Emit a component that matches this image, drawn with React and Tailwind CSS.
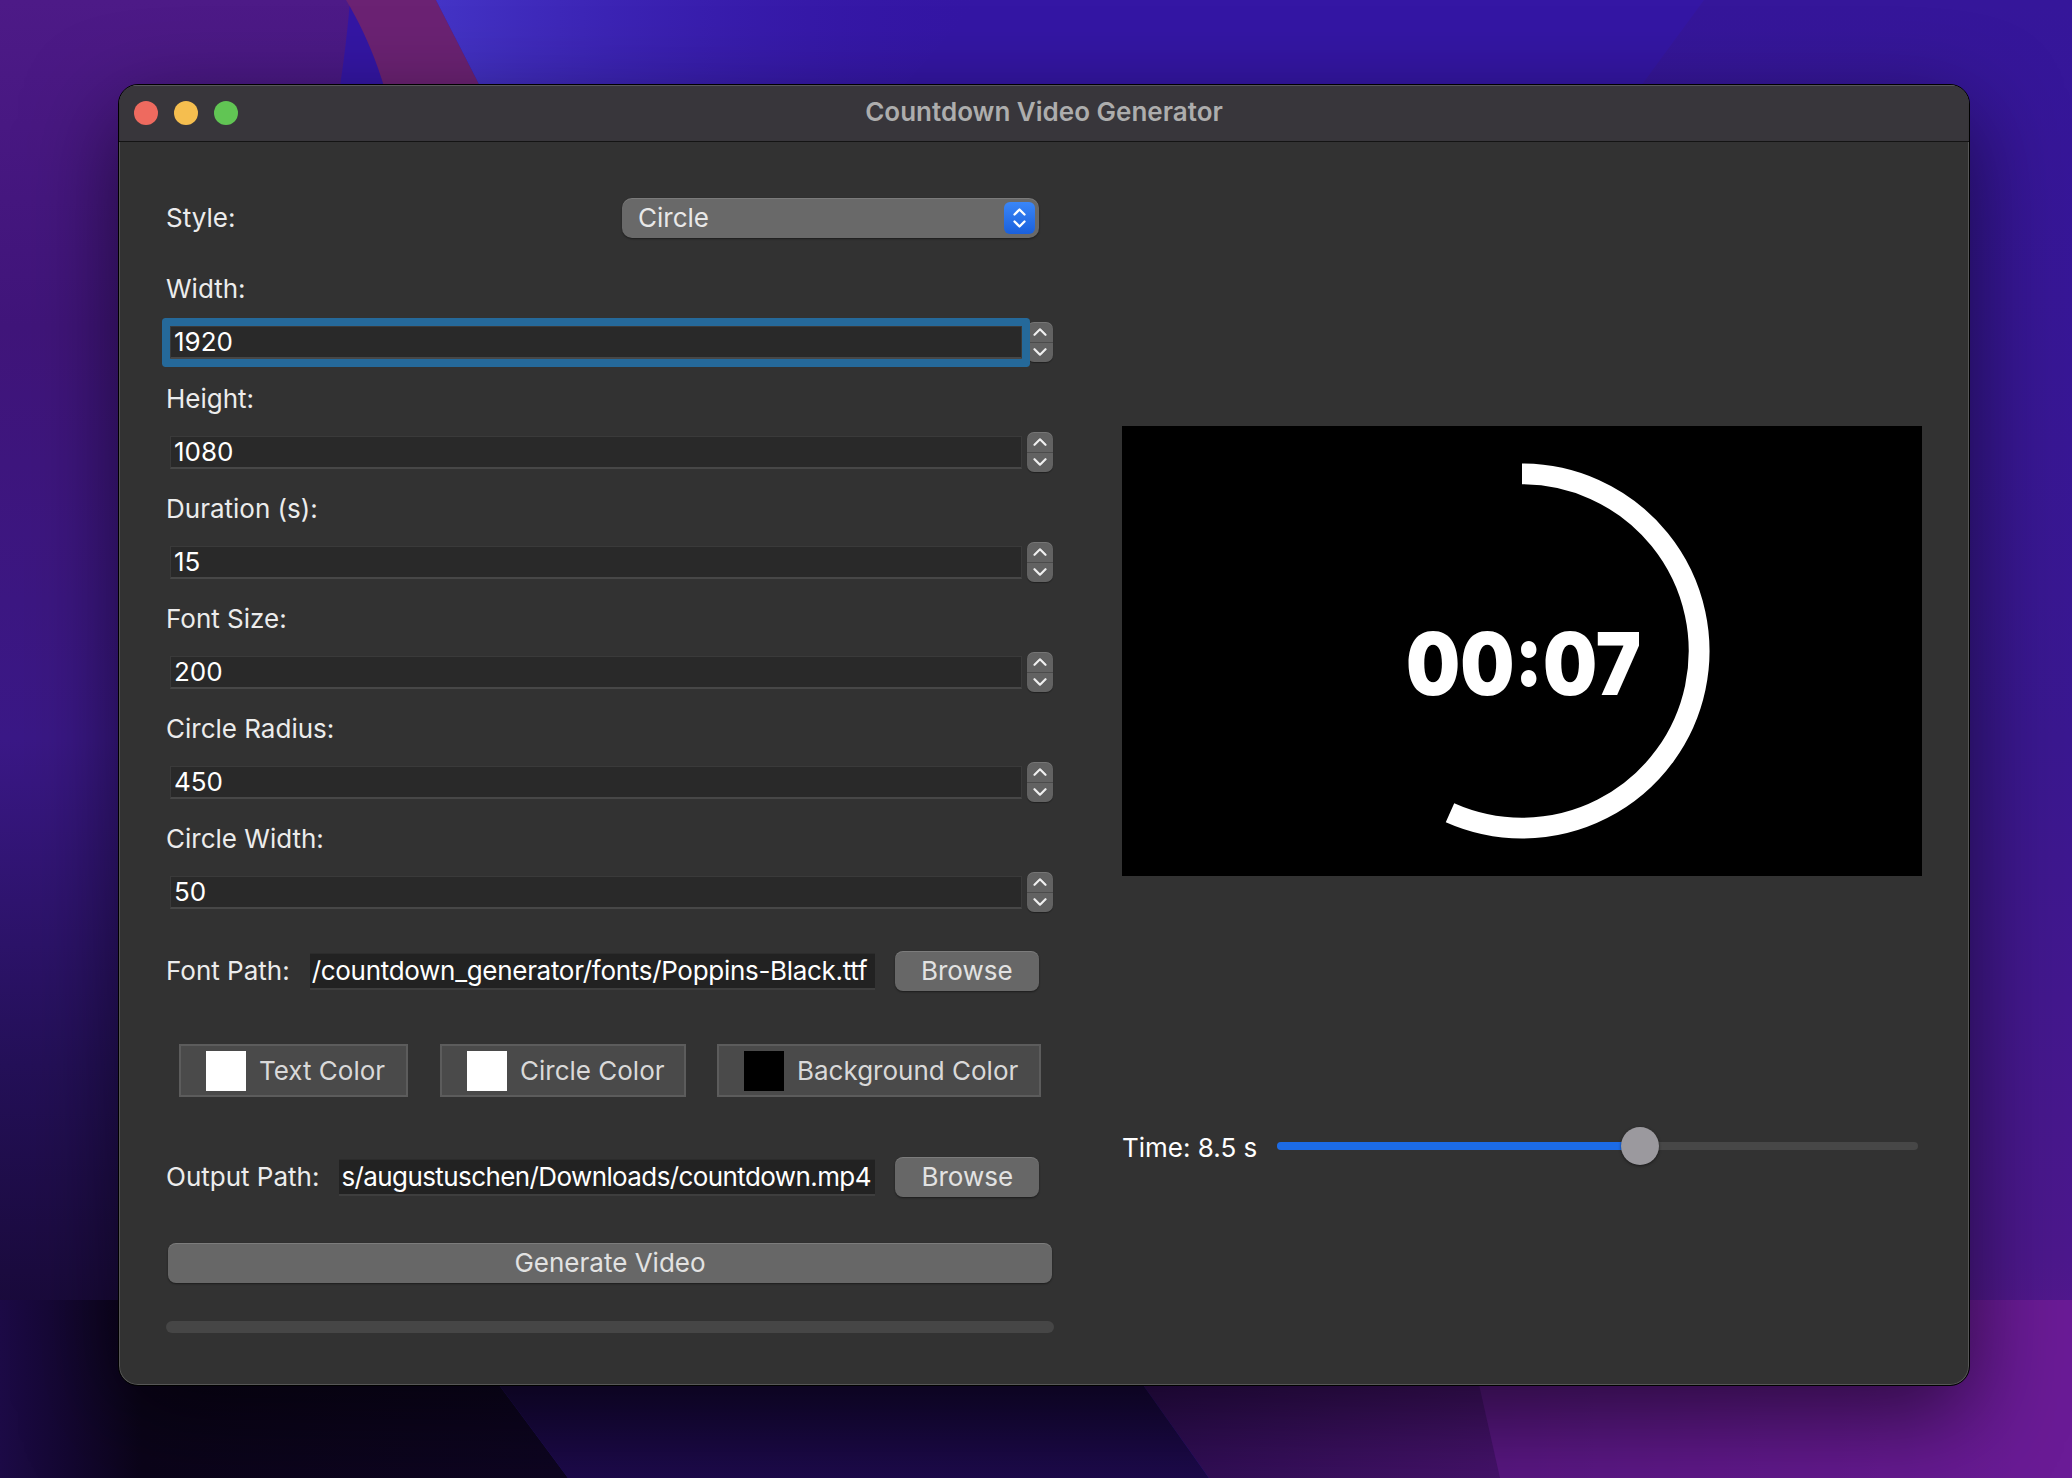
import React from "react";

const FONT = { fontFamily: 'Inter, "Noto Sans", "Liberation Sans", sans-serif' };

function Chevron({ dir }) {
  return (
    <svg width="14" height="8" viewBox="0 0 14 8" fill="none">
      <polyline
        points={dir === "up" ? "1.5,6.8 7,1.3 12.5,6.8" : "1.5,1.2 7,6.7 12.5,1.2"}
        stroke="#eeeeee"
        strokeWidth="2.2"
        strokeLinecap="round"
        strokeLinejoin="round"
      />
    </svg>
  );
}

function Stepper() {
  return (
    <div className="ml-[5px] w-[26px] h-[40px] rounded-[7px] bg-[#626262] flex flex-col overflow-hidden shadow-[inset_0_1px_0_rgba(255,255,255,0.12),0_1px_1px_rgba(0,0,0,0.35)]">
      <div className="flex-1 flex items-center justify-center border-b border-[#4b4b4b]">
        <Chevron dir="up" />
      </div>
      <div className="flex-1 flex items-center justify-center">
        <Chevron dir="down" />
      </div>
    </div>
  );
}

function SpinField({ value, focused }) {
  return (
    <div className="flex items-center h-[40px] pr-[1px]">
      <div
        className={
          "ml-[4px] flex-1 h-[33px] flex items-center pl-[3px] text-white text-[26px] leading-none bg-[#292929] border-x border-t border-[#3a3a3a] border-b-2 border-b-[#474747] " +
          (focused ? "rounded-[1px] shadow-[0_0_0_8px_#25699a] relative z-10" : "")
        }
      >
        {value}
      </div>
      <Stepper />
    </div>
  );
}

function Label({ children, className }) {
  return (
    <div className={"h-[36px] flex items-center text-[26px] leading-none text-[#ececec] " + (className || "")}>
      {children}
    </div>
  );
}

function PathField({ widthClass, text, tracking }) {
  return (
    <div
      className={
        widthClass +
        " h-[37px] bg-[#222222] border-b-2 border-[#3e3e3e] border-t border-t-[#2c2c2c] flex items-center overflow-hidden pl-[2px] text-white text-[26px] leading-none whitespace-nowrap"
      }
    >
      <span className={tracking}>{text}</span>
    </div>
  );
}

function GrayButton({ children, className }) {
  return (
    <div
      className={
        "h-[40px] rounded-[8px] bg-[#676767] flex items-center justify-center text-[26px] leading-none text-[#e2e2e2] shadow-[inset_0_1px_0_rgba(255,255,255,0.14),0_1px_2px_rgba(0,0,0,0.45)] " +
        (className || "")
      }
    >
      {children}
    </div>
  );
}

function ColorButton({ swatch, label, className }) {
  return (
    <div
      className={
        "h-[53px] border-2 border-[#5c5c5c] bg-[#4a4a4a] flex items-center pl-[25px] gap-[13px] text-[26px] leading-none text-[#d9d9d9] " +
        (className || "")
      }
    >
      <div className={"w-[40px] h-[40px] shrink-0 " + swatch} />
      <span>{label}</span>
    </div>
  );
}

function Wallpaper() {
  return (
    <svg
      className="absolute inset-0 w-full h-full"
      viewBox="0 0 2072 1478"
      preserveAspectRatio="none"
    >
      <defs>
        <linearGradient id="leftG" x1="0" y1="0" x2="0" y2="1">
          <stop offset="0" stopColor="#4d1a87" />
          <stop offset="0.22" stopColor="#40157a" />
          <stop offset="0.5" stopColor="#3a1886" />
          <stop offset="0.72" stopColor="#241058" />
          <stop offset="1" stopColor="#120626" />
        </linearGradient>
        <linearGradient id="glow" x1="0" y1="0" x2="1" y2="0">
          <stop offset="0" stopColor="#4434c6" />
          <stop offset="1" stopColor="#3616a8" stopOpacity="0" />
        </linearGradient>
        <linearGradient id="rightG" x1="0" y1="0" x2="0" y2="1">
          <stop offset="0" stopColor="#35169a" />
          <stop offset="0.5" stopColor="#3a1890" />
          <stop offset="0.85" stopColor="#4c188c" />
          <stop offset="1" stopColor="#621a90" />
        </linearGradient>
        <linearGradient id="brG" x1="0" y1="0" x2="1" y2="0">
          <stop offset="0" stopColor="#2a0c4e" />
          <stop offset="0.4" stopColor="#44126a" />
          <stop offset="1" stopColor="#6c1c98" />
        </linearGradient>
        <linearGradient id="darkG" x1="0" y1="0" x2="1" y2="0">
          <stop offset="0" stopColor="#1c0a46" />
          <stop offset="0.25" stopColor="#0b041a" />
          <stop offset="1" stopColor="#0e0522" />
        </linearGradient>
        <linearGradient id="midG" x1="0" y1="0" x2="0" y2="1">
          <stop offset="0" stopColor="#0f0528" />
          <stop offset="1" stopColor="#1d0a4c" />
        </linearGradient>
      </defs>
      <rect x="0" y="0" width="2072" height="1478" fill="#3416a4" />
      <path d="M0 0 H350 C330 260 200 600 150 900 L150 1478 H0 Z" fill="url(#leftG)" />
      <path d="M346 0 H436 L482 90 L470 160 L400 160 C390 90 370 40 346 0 Z" fill="#6b2273" />
      <path d="M436 0 H980 L900 90 H482 Z" fill="url(#glow)" />
      <path d="M1704 0 H2072 V1478 H1940 V200 C1800 140 1680 80 1638 90 Z" fill="url(#rightG)" />
      <path d="M1083 1300 H2072 V1478 H1209 Z" fill="url(#brG)" />
      <path d="M1460 1300 H2072 V1478 H1500 Z" fill="#6a1c96" opacity="0.55" />
      <path d="M436 1300 H1083 L1209 1478 H568 Z" fill="url(#midG)" />
      <path d="M0 1300 H436 L568 1478 H0 Z" fill="url(#darkG)" />
    </svg>
  );
}

function Preview() {
  const cx = 400;
  const cy = 225;
  const r = 177.1;
  const end = (114 * Math.PI) / 180;
  const ex = cx + r * Math.cos(end);
  const ey = cy + r * Math.sin(end);
  return (
    <div className="h-[450px] bg-black">
      <svg width="800" height="450" viewBox="0 0 800 450">
        <path
          d={`M ${cx} ${cy - r} A ${r} ${r} 0 1 1 ${ex.toFixed(1)} ${ey.toFixed(1)}`}
          stroke="#ffffff"
          strokeWidth="20.8"
          fill="none"
          strokeLinecap="butt"
        />
        <text
          x="401.5"
          y="269"
          textAnchor="middle"
          fill="#ffffff"
          fontSize="86"
          fontWeight="900"
          textLength="235"
          lengthAdjust="spacingAndGlyphs"
          style={{ fontFamily: 'Inter, "DejaVu Sans", sans-serif' }}
        >
          00:07
        </text>
      </svg>
    </div>
  );
}

export default function App() {
  const spins = [
    { label: "Width:", value: "1920", focused: true, mt: "mt-[33px]" },
    { label: "Height:", value: "1080", mt: "mt-[19px]" },
    { label: "Duration (s):", value: "15", mt: "mt-[19px]" },
    { label: "Font Size:", value: "200", mt: "mt-[19px]" },
    { label: "Circle Radius:", value: "450", mt: "mt-[19px]" },
    { label: "Circle Width:", value: "50", mt: "mt-[19px]" },
  ];

  return (
    <div className="relative w-[2072px] h-[1478px] overflow-hidden" style={FONT}>
      <Wallpaper />
      <div className="relative pl-[118px] pt-[84px]">
        <div className="w-[1852px] h-[1302px] rounded-[20px] overflow-hidden bg-[#323232] border border-black shadow-[0_30px_90px_rgba(0,0,0,0.55),inset_0_0_0_1px_rgba(255,255,255,0.18)] flex flex-col">
          {/* Title bar */}
          <div className="h-[57px] shrink-0 bg-[#38363b] border-b border-[#141414] grid grid-cols-[1fr_auto_1fr] items-center shadow-[inset_0_1px_0_rgba(255,255,255,0.16)]">
            <div className="flex items-center gap-[16px] pl-[15px]">
              <div className="w-[24px] h-[24px] rounded-full bg-[#ee6a5f]" />
              <div className="w-[24px] h-[24px] rounded-full bg-[#f5be4f]" />
              <div className="w-[24px] h-[24px] rounded-full bg-[#61c554]" />
            </div>
            <div className="text-[26px] font-semibold text-[#adadad] leading-none pb-[3px]">
              Countdown Video Generator
            </div>
            <div />
          </div>

          {/* Content */}
          <div className="flex-1 flex px-[47px] gap-[68px]">
            {/* Left column */}
            <div className="w-[888px] shrink-0 flex flex-col pt-[56px]">
              <div className="h-[40px] flex items-center justify-between pr-[15px]">
                <span className="text-[26px] leading-none text-[#ececec]">Style:</span>
                <div className="w-[417px] h-[40px] rounded-[10px] bg-[#696969] flex items-center justify-between pl-[16px] pr-[4px] shadow-[inset_0_1px_0_rgba(255,255,255,0.12),0_1px_2px_rgba(0,0,0,0.45)]">
                  <span className="text-[26px] leading-none text-[#e8e8e8]">Circle</span>
                  <div className="w-[31px] h-[32px] rounded-[6px] bg-gradient-to-b from-[#3a86f8] to-[#1a60dc] flex items-center justify-center">
                    <svg width="31" height="32" viewBox="0 0 31 32" fill="none">
                      <polyline points="10.5,12.5 15.5,7.5 20.5,12.5" stroke="#ffffff" strokeWidth="2.3" strokeLinecap="round" strokeLinejoin="round" />
                      <polyline points="10.5,19.5 15.5,24.5 20.5,19.5" stroke="#ffffff" strokeWidth="2.3" strokeLinecap="round" strokeLinejoin="round" />
                    </svg>
                  </div>
                </div>
              </div>

              {spins.map((s) => (
                <React.Fragment key={s.label}>
                  <Label className={s.mt}>{s.label}</Label>
                  <div className="mt-[15px]">
                    <SpinField value={s.value} focused={s.focused} />
                  </div>
                </React.Fragment>
              ))}

              <div className="mt-[39px] h-[40px] flex items-center gap-[20px] pr-[15px]">
                <span className="text-[26px] leading-none text-[#ececec] whitespace-nowrap">Font Path:</span>
                <div className="ml-auto">
                  <PathField
                    widthClass="w-[565px]"
                    tracking="tracking-[-0.3px]"
                    text="/countdown_generator/fonts/Poppins-Black.ttf"
                  />
                </div>
                <GrayButton className="w-[145px]">Browse</GrayButton>
              </div>

              <div className="mt-[53px] flex items-center pl-[13px]">
                <ColorButton swatch="bg-white" label="Text Color" className="w-[229px]" />
                <ColorButton swatch="bg-white" label="Circle Color" className="w-[246px] ml-[32px]" />
                <ColorButton swatch="bg-black" label="Background Color" className="w-[324px] ml-[31px]" />
              </div>

              <div className="mt-[60px] h-[40px] flex items-center gap-[20px] pr-[15px]">
                <span className="text-[26px] leading-none text-[#ececec] whitespace-nowrap">Output Path:</span>
                <div className="ml-auto">
                  <PathField
                    widthClass="w-[536px]"
                    tracking="tracking-[-0.6px]"
                    text="s/augustuschen/Downloads/countdown.mp4"
                  />
                </div>
                <GrayButton className="w-[145px]">Browse</GrayButton>
              </div>

              <GrayButton className="mt-[46px] ml-[2px] mr-[2px]">Generate Video</GrayButton>

              <div className="mt-[38px] h-[12px] rounded-full bg-[#464646]" />
            </div>

            {/* Right column */}
            <div className="flex-1 flex flex-col pt-[284px]">
              <Preview />
              <div className="mt-[250px] h-[40px] flex items-center">
                <span className="text-[26px] leading-none text-white whitespace-nowrap pt-[4px]">Time: 8.5 s</span>
                <div className="ml-auto mr-[4px] w-[641px] h-[40px] flex items-center">
                  <div className="relative w-full h-[8px] rounded-full bg-[#474747]">
                    <div className="absolute left-0 top-0 h-[8px] w-[363px] rounded-full bg-[#1c6be6]" />
                    <div className="absolute left-[344px] top-[-15px] w-[38px] h-[38px] rounded-full bg-[#9b999e] shadow-[0_1px_3px_rgba(0,0,0,0.5)]" />
                  </div>
                </div>
              </div>
            </div>
          </div>
        </div>
      </div>
    </div>
  );
}
